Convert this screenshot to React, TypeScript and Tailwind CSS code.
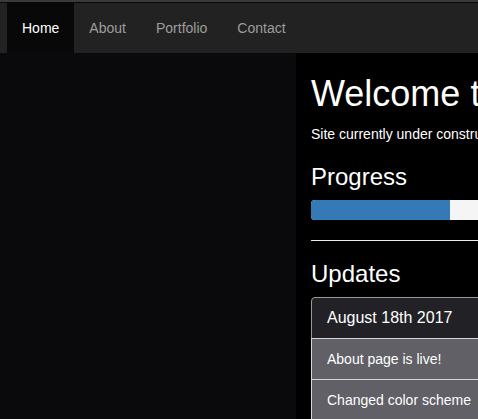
const links = ["Home", "About", "Portfolio", "Contact"];

const updates = ["About page is live!", "Changed color scheme"];

export default function App() {
  return (
    <div
      className="flex h-[419px] w-[478px] flex-col overflow-hidden bg-black text-[14px] leading-[20px] text-white"
      style={{ fontFamily: '"Liberation Sans", Arial, sans-serif' }}
    >
      {/* Navbar */}
      <div className="h-[2px] shrink-0 bg-[#3a3a3a]" />
      <nav className="flex h-[51px] shrink-0 border-t border-[#080808] bg-[#222222] pl-[7px]">
        {links.map((l, i) => (
          <a
            key={l}
            className={
              i === 0
                ? "block h-[50px] bg-[#080808] px-[15px] py-[15px] text-white"
                : "block h-[50px] px-[15px] py-[15px] text-[#9d9d9d]"
            }
          >
            {l}
          </a>
        ))}
      </nav>

      {/* Body */}
      <div className="flex min-h-0 flex-1">
        <div className="w-[296px] shrink-0 bg-[#0a0a0c]" />
        <div className="min-w-0 flex-1 overflow-hidden bg-black">
          <div className="w-[520px] px-[15px] pt-[21px] whitespace-nowrap">
            <h1 className="mb-[10px] text-[36px] leading-[1.1]">Welcome to my website</h1>
            <p className="mb-[20px]">Site currently under construction. Check back soon!</p>

            <h2 className="mb-[10px] text-[24px] leading-[1.1]">Progress</h2>
            <div className="flex h-[20px] overflow-hidden rounded-[4px] bg-[#f5f5f5]">
              <div className="h-full w-[139px] bg-[#337ab7]" />
            </div>

            <hr className="my-[20px] border-0 border-t border-[#eeeeee]" />

            <h2 className="mb-[10px] text-[24px] leading-[1.1]">Updates</h2>
            <div className="flex flex-col">
              <div className="rounded-t-[4px] border border-[#999] bg-[#222226] px-[15px] py-[10px] text-[16px] leading-[20px]">
                August 18th 2017
              </div>
              {updates.map((u) => (
                <div
                  key={u}
                  className="-mt-px border border-[#d5d5d5] bg-[#606066] px-[15px] py-[10px]"
                >
                  {u}
                </div>
              ))}
            </div>
          </div>
        </div>
      </div>
    </div>
  );
}
